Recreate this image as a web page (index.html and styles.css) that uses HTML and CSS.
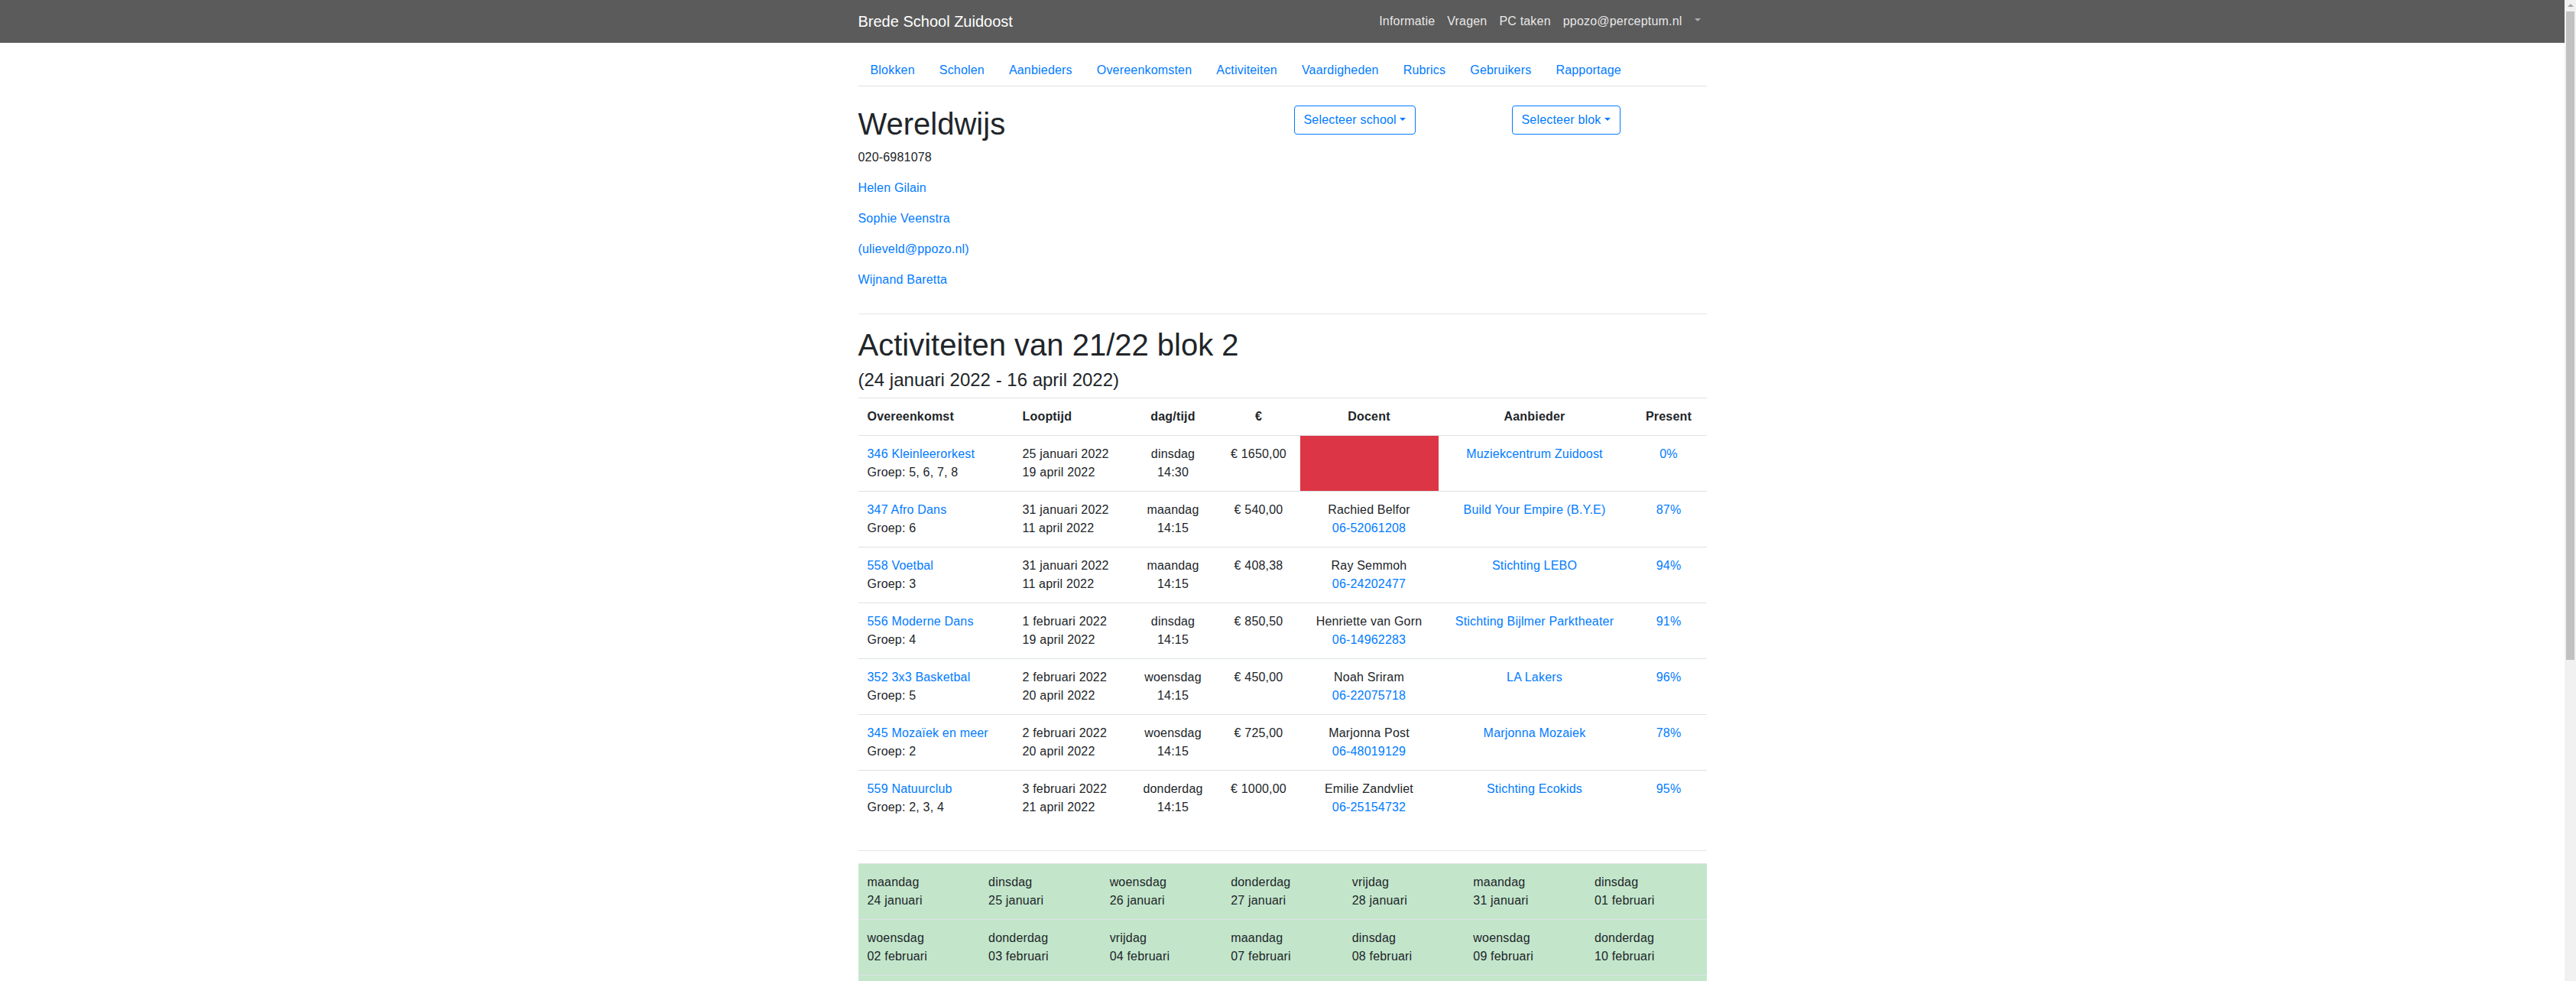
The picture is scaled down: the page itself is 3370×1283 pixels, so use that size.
FILE: index.html
```html
<!DOCTYPE html>
<html lang="nl">
<head>
<meta charset="utf-8">
<title>Brede School Zuidoost</title>
<link rel="stylesheet" href="styles.css">
</head>
<body>
<header class="navbar">
  <div class="container navbar-inner">
    <a class="brand" href="#">Brede School Zuidoost</a>
    <nav class="topnav">
      <a class="toplink" href="#">Informatie</a>
      <a class="toplink" href="#">Vragen</a>
      <a class="toplink" href="#">PC taken</a>
      <a class="toplink" href="#">ppozo@perceptum.nl</a>
      <a class="toplink toplink-caret" href="#"><span class="caret"></span></a>
    </nav>
  </div>
</header>

<main class="container">
  <nav class="tabs">
    <a class="tab" href="#">Blokken</a>
    <a class="tab" href="#">Scholen</a>
    <a class="tab" href="#">Aanbieders</a>
    <a class="tab" href="#">Overeenkomsten</a>
    <a class="tab" href="#">Activiteiten</a>
    <a class="tab" href="#">Vaardigheden</a>
    <a class="tab" href="#">Rubrics</a>
    <a class="tab" href="#">Gebruikers</a>
    <a class="tab" href="#">Rapportage</a>
  </nav>

  <div class="row">
    <div class="col-half">
      <h1 class="title">Wereldwijs</h1>
      <p class="para">020-6981078</p>
      <p class="para"><a href="#">Helen Gilain</a></p>
      <p class="para"><a href="#">Sophie Veenstra</a></p>
      <p class="para"><a href="#">(ulieveld@ppozo.nl)</a></p>
      <p class="para"><a href="#">Wijnand Baretta</a></p>
    </div>
    <div class="col-quarter">
      <button class="btn-outline" type="button">Selecteer school<span class="btn-caret"></span></button>
    </div>
    <div class="col-quarter">
      <button class="btn-outline" type="button">Selecteer blok<span class="btn-caret"></span></button>
    </div>
  </div>

  <hr class="rule">

  <h1 class="title">Activiteiten van 21/22 blok 2</h1>
  <h4 class="subtitle">(24 januari 2022 - 16 april 2022)</h4>

  <table class="table activities">
    <colgroup>
      <col class="c-ovk"><col class="c-loop"><col class="c-dag"><col class="c-eur"><col class="c-doc"><col class="c-aanb"><col class="c-pres">
    </colgroup>
    <thead>
      <tr>
        <th class="left">Overeenkomst</th>
        <th class="left">Looptijd</th>
        <th>dag/tijd</th>
        <th>€</th>
        <th>Docent</th>
        <th>Aanbieder</th>
        <th>Present</th>
      </tr>
    </thead>
    <tbody>
      <tr>
        <td class="left"><a href="#">346 Kleinleerorkest</a><br>Groep: 5, 6, 7, 8</td>
        <td class="left">25 januari 2022<br>19 april 2022</td>
        <td>dinsdag<br>14:30</td>
        <td>€ 1650,00</td>
        <td class="missing"></td>
        <td><a href="#">Muziekcentrum Zuidoost</a></td>
        <td><a href="#">0%</a></td>
      </tr>
      <tr>
        <td class="left"><a href="#">347 Afro Dans</a><br>Groep: 6</td>
        <td class="left">31 januari 2022<br>11 april 2022</td>
        <td>maandag<br>14:15</td>
        <td>€ 540,00</td>
        <td>Rachied Belfor<br><a href="#">06-52061208</a></td>
        <td><a href="#">Build Your Empire (B.Y.E)</a></td>
        <td><a href="#">87%</a></td>
      </tr>
      <tr>
        <td class="left"><a href="#">558 Voetbal</a><br>Groep: 3</td>
        <td class="left">31 januari 2022<br>11 april 2022</td>
        <td>maandag<br>14:15</td>
        <td>€ 408,38</td>
        <td>Ray Semmoh<br><a href="#">06-24202477</a></td>
        <td><a href="#">Stichting LEBO</a></td>
        <td><a href="#">94%</a></td>
      </tr>
      <tr>
        <td class="left"><a href="#">556 Moderne Dans</a><br>Groep: 4</td>
        <td class="left">1 februari 2022<br>19 april 2022</td>
        <td>dinsdag<br>14:15</td>
        <td>€ 850,50</td>
        <td>Henriette van Gorn<br><a href="#">06-14962283</a></td>
        <td><a href="#">Stichting Bijlmer Parktheater</a></td>
        <td><a href="#">91%</a></td>
      </tr>
      <tr>
        <td class="left"><a href="#">352 3x3 Basketbal</a><br>Groep: 5</td>
        <td class="left">2 februari 2022<br>20 april 2022</td>
        <td>woensdag<br>14:15</td>
        <td>€ 450,00</td>
        <td>Noah Sriram<br><a href="#">06-22075718</a></td>
        <td><a href="#">LA Lakers</a></td>
        <td><a href="#">96%</a></td>
      </tr>
      <tr>
        <td class="left"><a href="#">345 Mozaïek en meer</a><br>Groep: 2</td>
        <td class="left">2 februari 2022<br>20 april 2022</td>
        <td>woensdag<br>14:15</td>
        <td>€ 725,00</td>
        <td>Marjonna Post<br><a href="#">06-48019129</a></td>
        <td><a href="#">Marjonna Mozaiek</a></td>
        <td><a href="#">78%</a></td>
      </tr>
      <tr>
        <td class="left"><a href="#">559 Natuurclub</a><br>Groep: 2, 3, 4</td>
        <td class="left">3 februari 2022<br>21 april 2022</td>
        <td>donderdag<br>14:15</td>
        <td>€ 1000,00</td>
        <td>Emilie Zandvliet<br><a href="#">06-25154732</a></td>
        <td><a href="#">Stichting Ecokids</a></td>
        <td><a href="#">95%</a></td>
      </tr>
    </tbody>
  </table>

  <hr class="rule">

  <table class="table calendar">
    <tbody>
      <tr><td>maandag<br>24 januari</td><td>dinsdag<br>25 januari</td><td>woensdag<br>26 januari</td><td>donderdag<br>27 januari</td><td>vrijdag<br>28 januari</td><td>maandag<br>31 januari</td><td>dinsdag<br>01 februari</td></tr>
      <tr><td>woensdag<br>02 februari</td><td>donderdag<br>03 februari</td><td>vrijdag<br>04 februari</td><td>maandag<br>07 februari</td><td>dinsdag<br>08 februari</td><td>woensdag<br>09 februari</td><td>donderdag<br>10 februari</td></tr>
      <tr><td>vrijdag<br>11 februari</td><td>maandag<br>14 februari</td><td>dinsdag<br>15 februari</td><td>woensdag<br>16 februari</td><td>donderdag<br>17 februari</td><td>vrijdag<br>18 februari</td><td>maandag<br>21 februari</td></tr>
      <tr><td>dinsdag<br>22 februari</td><td>woensdag<br>23 februari</td><td>donderdag<br>24 februari</td><td>vrijdag<br>25 februari</td><td>maandag<br>28 februari</td><td>dinsdag<br>01 maart</td><td>woensdag<br>02 maart</td></tr>
      <tr><td>donderdag<br>03 maart</td><td>vrijdag<br>04 maart</td><td>maandag<br>07 maart</td><td>dinsdag<br>08 maart</td><td>woensdag<br>09 maart</td><td>donderdag<br>10 maart</td><td>vrijdag<br>11 maart</td></tr>
      <tr><td>maandag<br>14 maart</td><td>dinsdag<br>15 maart</td><td>woensdag<br>16 maart</td><td>donderdag<br>17 maart</td><td>vrijdag<br>18 maart</td><td>maandag<br>21 maart</td><td>dinsdag<br>22 maart</td></tr>
      <tr><td>woensdag<br>23 maart</td><td>donderdag<br>24 maart</td><td>vrijdag<br>25 maart</td><td>maandag<br>28 maart</td><td>dinsdag<br>29 maart</td><td>woensdag<br>30 maart</td><td>donderdag<br>31 maart</td></tr>
      <tr><td>vrijdag<br>01 april</td><td>maandag<br>04 april</td><td>dinsdag<br>05 april</td><td>woensdag<br>06 april</td><td>donderdag<br>07 april</td><td>vrijdag<br>08 april</td><td>maandag<br>11 april</td></tr>
      <tr><td>dinsdag<br>12 april</td><td>woensdag<br>13 april</td><td>donderdag<br>14 april</td><td>vrijdag<br>15 april</td><td></td><td></td><td></td></tr>
    </tbody>
  </table>
</main>

<div class="scrollbar" aria-hidden="true">
  <div class="scroll-arrow"></div>
  <div class="scroll-thumb"></div>
</div>
</body>
</html>
```

FILE: styles.css
```css
* { box-sizing: border-box; }

html, body {
  margin: 0;
  padding: 0;
}

body {
  font-family: "Liberation Sans", Arial, Helvetica, sans-serif;
  font-size: 16px;
  line-height: 1.5;
  letter-spacing: 0.19px;
  color: #212529;
  background: #fff;
  padding-right: 15px;
}

a {
  color: #007bff;
  text-decoration: none;
}

.container {
  width: 100%;
  max-width: 1140px;
  padding: 0 15px;
  margin: 0 auto;
}

/* fake browser scrollbar (overlay on the right edge) */
.scrollbar {
  position: fixed;
  top: 0;
  right: 0;
  width: 15px;
  height: 100vh;
  background: #f1f1f1;
}

.scroll-arrow {
  width: 0;
  height: 0;
  margin: 5px auto 0;
  border-bottom: 4px solid #a3a3a3;
  border-left: 4px solid transparent;
  border-right: 4px solid transparent;
}

.scroll-thumb {
  margin: 6px 2px 0;
  height: 848px;
  background: #c1c1c1;
}

/* top navbar */
.navbar {
  background: #5b5b5b;
  height: 56px;
}

.navbar-inner {
  height: 56px;
  display: flex;
  align-items: center;
  justify-content: space-between;
}

.brand {
  color: #fff;
  font-size: 20px;
  line-height: 30px;
  padding: 5px 0;
  letter-spacing: 0;
}

.topnav {
  display: flex;
  align-items: center;
}

.toplink {
  color: rgba(255, 255, 255, 0.88);
  padding: 8px;
  line-height: 24px;
}

.toplink-caret {
  display: flex;
  align-items: center;
  height: 40px;
}

.caret {
  display: inline-block;
  width: 0;
  height: 0;
  border-top: 4.8px solid rgba(255, 255, 255, 0.5);
  border-left: 4.8px solid transparent;
  border-right: 4.8px solid transparent;
  margin-top: -4px;
}

/* tabs */
.tabs {
  display: flex;
  margin-top: 16px;
  border-bottom: 1px solid #dee2e6;
}

.tab {
  display: block;
  padding: 8px 16px;
  line-height: 24px;
}

/* header row */
.row {
  display: flex;
  margin: 25px -15px 0;
}

.col-half {
  width: 50%;
  padding: 0 15px;
}

.col-quarter {
  width: 25%;
  padding: 0 15px;
}

.title {
  font-size: 40px;
  font-weight: 500;
  line-height: 1.2;
  letter-spacing: 0;
  margin: 0 0 8px;
}

.subtitle {
  font-size: 24px;
  font-weight: 500;
  line-height: 1.2;
  letter-spacing: 0;
  margin: 0 0 8px;
}

.para {
  margin: 0 0 16px;
}

.btn-outline {
  font-family: inherit;
  font-size: 16px;
  line-height: 24px;
  letter-spacing: inherit;
  padding: 6px 12px;
  color: #007bff;
  background: transparent;
  border: 1px solid #007bff;
  border-radius: 4px;
  cursor: pointer;
}

.btn-caret {
  display: inline-block;
  margin-left: 4px;
  vertical-align: 4px;
  width: 0;
  height: 0;
  border-top: 4.8px solid #007bff;
  border-left: 4.8px solid transparent;
  border-right: 4.8px solid transparent;
}

.rule {
  margin: 16px 0;
  border: 0;
  border-top: 1px solid rgba(0, 0, 0, 0.1);
  height: 0;
}

/* tables */
.table {
  width: 100%;
  border-collapse: collapse;
  table-layout: fixed;
  margin-bottom: 16px;
}

.table.activities {
  margin-bottom: 32px;
}

.table th,
.table td {
  padding: 12px;
  border-top: 1px solid #dee2e6;
  vertical-align: top;
  text-align: center;
  line-height: 24px;
}

.table th {
  font-weight: bold;
  vertical-align: bottom;
}

.table .left {
  text-align: left;
}

.c-ovk { width: 203px; }
.c-loop { width: 151px; }
.c-dag { width: 116px; }
.c-eur { width: 108px; }
.c-doc { width: 181px; }
.c-aanb { width: 252px; }
.c-pres { width: 99px; }

.missing {
  background: #dc3545;
}

.calendar td {
  text-align: left;
  background: #c3e6cb;
}
```
